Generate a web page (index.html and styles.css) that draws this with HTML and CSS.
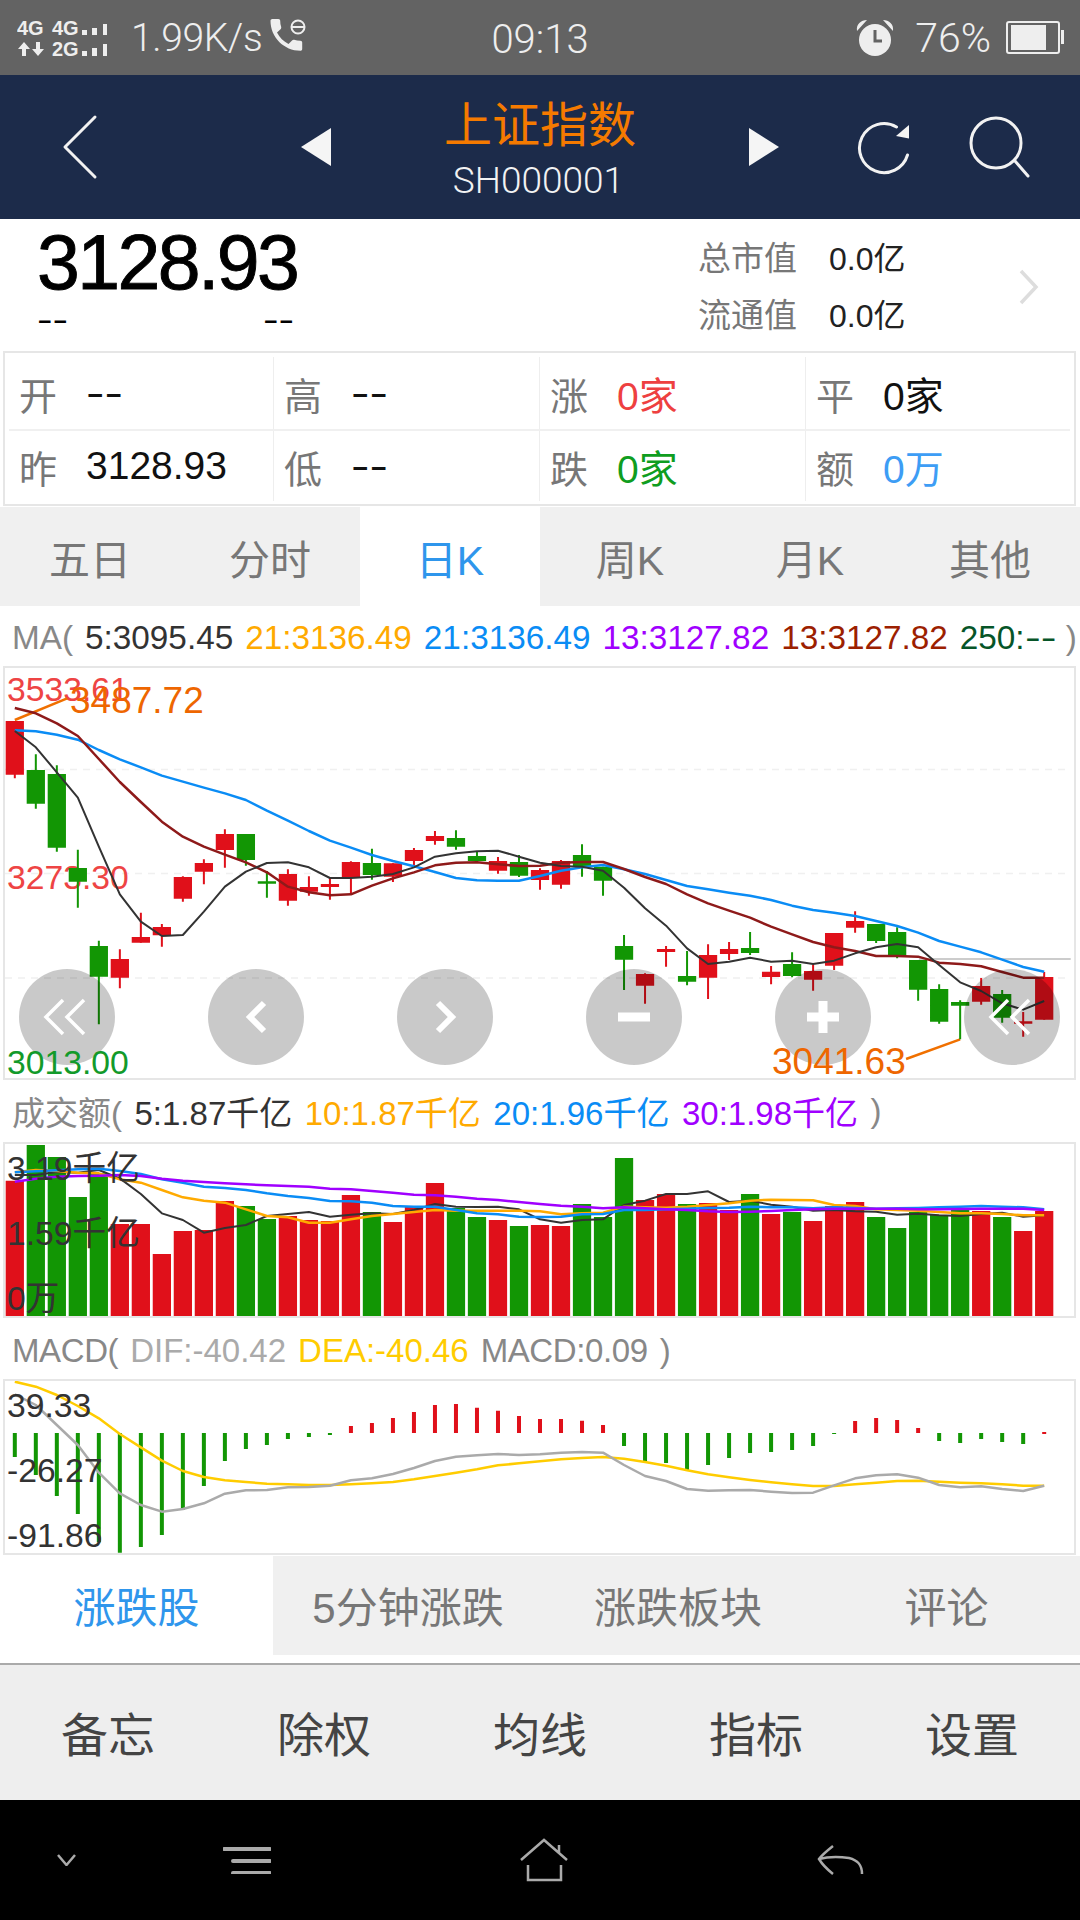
FILE: index.html
```html
<!DOCTYPE html>
<html lang="zh">
<head>
<meta charset="utf-8">
<title>上证指数</title>
<link rel="stylesheet" href="styles.css">
</head>
<body>
<div class="status">
  <div class="st-left">
    <svg class="sig" width="90" height="75" viewBox="0 0 90 75">
      <text class="sig-t" x="0" y="35">4G</text><text class="sig-t" x="35" y="35">4G</text><text class="sig-t" x="35" y="56">2G</text>
      <path class="sig-f" d="M65 30h5v5h-5zM75 28h5v7h-5zM86 24h4v11h-4zM65 51h5v5h-5zM75 48h5v8h-5zM86 44h4v12h-4z"/>
      <path class="sig-f" d="M7 42l6 7h-4v7h-4v-7h-4zM21 56l-6-7h4v-7h4v7h4z"/>
    </svg>
    <span class="speed">1.99K/s</span>
    <svg class="call" width="38" height="36" viewBox="0 0 38 36">
      <path class="call-f" d="M8 13.500c2.500 5 6.600 9 11.500 11.500l3.800-3.800c.5-.5 1.200-.7 1.800-.4 1.900.7 4 1 6.300 1 1 0 1.800.7 1.800 1.700V30c0 1-.8 1.800-1.800 1.800C15 31.800 1.500 18.300 1.500 1.800 1.500.8 2.300 0 3.300 0h6.100c1 0 1.800.8 1.800 1.800 0 2.300.3 4.400 1 6.300.2.600 0 1.300-.4 1.800z"/>
      <circle class="call-o" cx="29" cy="8" r="6.500"/><path class="call-o" d="M23 8h12"/>
    </svg>
  </div>
  <span class="time">09:13</span>
  <div class="st-right">
    <svg width="38" height="38" viewBox="0 0 38 38">
      <circle class="al-f" cx="19" cy="21" r="16"/>
      <path class="al-f" d="M1 12C0 5 5 1 11 1zM37 12c1-7-4-11-10-11z"/>
      <path class="al-h" d="M19 11v11h7"/>
    </svg>
    <span class="pct">76%</span>
    <svg width="60" height="34" viewBox="0 0 60 34">
      <rect class="bat-o" x="1" y="1" width="52" height="31" rx="2"/>
      <rect class="al-f" x="5" y="4" width="35" height="25"/>
      <rect class="al-f" x="55" y="9" width="3" height="14"/>
    </svg>
  </div>
</div>

<header class="header">
  <svg class="h-back" width="40" height="66" viewBox="0 0 40 66"><path class="h-line" d="M33 3L3 33l30 30"/></svg>
  <svg width="30" height="38" viewBox="0 0 30 38"><path class="h-fill" d="M30 0V38L0 19z"/></svg>
  <div class="title">
    <div class="title-name">上证指数</div>
    <div class="title-code">SH000001</div>
  </div>
  <svg width="30" height="38" viewBox="0 0 30 38"><path class="h-fill" d="M0 0V38L30 19z"/></svg>
  <svg class="h-ref" width="56" height="56" viewBox="0 0 56 56"><path class="h-line" d="M52.500 36A24.500 24.500 0 1 1 41.500 8"/><path class="h-fill" d="M54 6V19.500L41 17z"/></svg>
  <svg class="h-search" width="62" height="66" viewBox="0 0 62 66"><circle class="h-line" cx="27" cy="29" r="25"/><path class="h-line" d="M46 47l13 15"/></svg>
</header>

<section class="quote">
  <div class="q-left">
    <div class="q-price">3128.93</div>
    <div class="q-sub"><span class="dash">--</span><span class="dash">--</span></div>
  </div>
  <div class="q-right">
    <div class="q-row"><span class="q-lab">总市值</span><span>0.0亿</span></div>
    <div class="q-row"><span class="q-lab">流通值</span><span>0.0亿</span></div>
  </div>
  <svg class="q-chev" width="22" height="36" viewBox="0 0 22 36"><path d="M3 2l15 16L3 34"/></svg>
</section>

<section class="stats">
  <div class="cell cell-first cell-top"><span class="lab">开</span><span class="dash">--</span></div>
  <div class="cell cell-top"><span class="lab">高</span><span class="dash">--</span></div>
  <div class="cell cell-top"><span class="lab">涨</span><span class="c-red">0家</span></div>
  <div class="cell cell-top cell-last"><span class="lab">平</span><span>0家</span></div>
  <div class="cell cell-first"><span class="lab">昨</span><span>3128.93</span></div>
  <div class="cell"><span class="lab">低</span><span class="dash">--</span></div>
  <div class="cell"><span class="lab">跌</span><span class="c-green">0家</span></div>
  <div class="cell cell-last"><span class="lab">额</span><span class="c-blue">0万</span></div>
</section>

<nav class="ktabs">
  <div>五日</div><div>分时</div><div class="on">日K</div><div>周K</div><div>月K</div><div>其他</div>
</nav>

<div class="legend lg-ma">
  <span class="l-gray">MA(</span><span class="l-dark">5:3095.45</span><span class="l-orange">21:3136.49</span><span class="l-blue">21:3136.49</span><span class="l-purple">13:3127.82</span><span class="l-maroon">13:3127.82</span><span class="l-forest">250:<span class="dash dash-in">--</span></span><span class="l-gray">)</span>
</div>

<div class="chart chart-k">
  <svg width="1069" height="410" viewBox="5 668 1069 410">
    <g class="grid"><path d="M5 769.500H1070M5 873.500H1070M5 978H1070"/></g>
    <text class="t33 c-lred" x="7" y="701">3533.61</text>
    <text class="t37 c-oran" x="70" y="713">3487.72</text>
    <text class="t33 c-lred" x="7" y="889">3273.30</text>
    <g transform="matrix(0.34439 0 0 0.33333 0 660)">
      <path class="ln-gray" d="M2668 897H3109"/>
      <path class="ln-orange" d="M43 180L195 115M2631 1197L2788 1138"/>
      <path class="wick-r" d="M43 183V355M348 868V985M409 758V848M470 792V860M531 649V725M592 598V673M653 508V623M836 628V737M897 649V707M958 652V719M1019 604V703M1141 610V666M1202 564V620M1263 513V554M1446 591V641M1568 625V689M1629 600V686M1873 940V1031M1934 858V920M2056 853V1017M2117 846V900M2239 918V973M2361 915V992M2422 819V930M2483 754V818M2849 954V1034M2971 1056V1130M3032 936V1079"/>
      <path class="wick-g" d="M104 283V446M165 316V575M226 569V743M287 842V1093M714 522V617M775 633V713M1080 566V659M1324 511V569M1385 575V606M1507 585V651M1690 553V650M1751 620V707M1812 825V990M1995 873V976M2178 816V885M2300 877V952M2544 792V849M2605 802V895M2666 900V1022M2727 973V1091M2788 1021V1138M2910 990V1088"/>
      <path class="b-r" d="M16.500 183h53V344h-53zM321.500 897h53V953h-53zM382.500 831h53V848h-53zM443.500 801h53V826h-53zM504.500 651h53V716h-53zM565.500 609h53V635h-53zM626.500 522h53V570h-53zM809.500 642h53V722h-53zM870.500 681h53V695h-53zM931.500 672h53V681h-53zM992.500 606h53V652h-53zM1114.500 610h53V650h-53zM1175.500 570h53V603h-53zM1236.500 528h53V543h-53zM1419.500 603h53V632h-53zM1541.500 630h53V660h-53zM1602.500 603h53V674h-53zM1846.500 942h53V977h-53zM1907.500 867h53V876h-53zM2029.500 885h53V953h-53zM2090.500 867h53V882h-53zM2212.500 935h53V951h-53zM2334.500 933h53V959h-53zM2395.500 819h53V917h-53zM2456.500 783h53V803h-53zM2822.500 978h53V1025h-53zM2944.500 1084h53V1091h-53zM3005.500 951h53V1079h-53z"/>
      <path class="b-g" d="M77.500 330h53V431h-53zM138.500 342h53V563h-53zM199.500 624h53V665h-53zM260.500 858h53V950h-53zM687.500 522h53V600h-53zM748.500 664h53V671h-53zM1053.500 609h53V645h-53zM1297.500 534h53V560h-53zM1358.500 588h53V603h-53zM1480.500 606h53V647h-53zM1663.500 585h53V620h-53zM1724.500 620h53V662h-53zM1785.500 858h53V899h-53zM1968.500 948h53V965h-53zM2151.500 864h53V879h-53zM2273.500 912h53V948h-53zM2517.500 792h53V843h-53zM2578.500 816h53V888h-53zM2639.500 900h53V989h-53zM2700.500 987h53V1085h-53zM2761.500 1026h53V1037h-53zM2883.500 1002h53V1073h-53z"/>
      <polyline class="ln-blue" points="43,211 104,214 165,224 226,239 287,270 348,298 409,322 470,347 531,365 592,383 653,400 714,420 775,452 836,482 897,513 958,542 1019,563 1080,585 1141,603 1202,619 1263,636 1324,654 1385,661 1446,662 1507,662 1568,648 1629,632 1690,622 1751,615 1812,628 1873,642 1934,660 1995,678 2056,688 2117,698 2178,707 2239,720 2300,737 2361,750 2422,758 2483,768 2544,783 2605,798 2666,818 2727,843 2788,860 2849,877 2910,899 2971,921 3032,935"/>
      <polyline class="ln-maroon" points="43,144 104,160 165,190 226,228 287,297 348,366 409,426 470,485 531,530 592,560 653,584 714,607 775,637 836,680 897,697 958,706 1019,703 1080,677 1141,655 1202,637 1263,616 1324,608 1385,607 1446,613 1507,618 1568,617 1629,608 1690,606 1751,606 1812,627 1873,651 1934,672 1995,703 2056,730 2117,752 2178,773 2239,800 2300,823 2361,846 2422,862 2483,873 2544,888 2605,888 2666,890 2727,908 2788,912 2849,919 2910,936 2971,953 3032,953"/>
      <polyline class="ln-black" points="43,213 104,262 165,337 226,413 287,560 348,703 409,785 470,828 531,825 592,755 653,680 714,635 775,609 836,607 897,622 958,654 1019,654 1080,650 1141,642 1202,622 1263,590 1324,580 1385,574 1446,572 1507,590 1568,608 1629,618 1690,620 1751,632 1812,683 1873,745 1934,797 1995,865 2056,912 2117,905 2178,893 2239,905 2300,902 2361,912 2422,902 2483,880 2544,862 2605,852 2666,862 2727,915 2788,967 2849,993 2910,1030 2971,1049 3032,1023"/>
    </g>
  </svg>
  <div class="pads">
    <div class="pad"><svg width="96" height="96" viewBox="0 0 96 96"><path class="ic-thin" d="M44 31L27 48l17 17M65 31L48 48l17 17"/></svg></div>
    <div class="pad"><svg width="96" height="96" viewBox="0 0 96 96"><path class="ic-bold" d="M56 34L42 48l14 14"/></svg></div>
    <div class="pad"><svg width="96" height="96" viewBox="0 0 96 96"><path class="ic-bold" d="M41 34l14 14-14 14"/></svg></div>
    <div class="pad"><svg width="96" height="96" viewBox="0 0 96 96"><path class="ic-fill" d="M32 43.500h32v9H32z"/></svg></div>
    <div class="pad"><svg width="96" height="96" viewBox="0 0 96 96"><path class="ic-fill" d="M32 43.500h11.500V32h9v11.500H64v9H52.500V64h-9V52.500H32z"/></svg></div>
    <div class="pad"><svg width="96" height="96" viewBox="0 0 96 96"><path class="ic-thin" d="M44 31L27 48l17 17M65 31L48 48l17 17"/></svg></div>
  </div>
  <span class="tag tag-low">3013.00</span>
  <span class="tag tag-min">3041.63</span>
</div>

<div class="legend lg-vol">
  <span class="l-gray">成交额(</span><span class="l-dark">5:1.87千亿</span><span class="l-orange">10:1.87千亿</span><span class="l-blue">20:1.96千亿</span><span class="l-purple">30:1.98千亿</span><span class="l-gray">)</span>
</div>

<div class="chart chart-sm">
  <svg width="1069" height="172" viewBox="5 1144 1069 172">
    <g transform="matrix(0.34439 0 0 0.33333 0 1090)">
      <path class="b-r" d="M16.500 272h53V678h-53zM321.500 402h53V678h-53zM382.500 402h53V678h-53zM443.500 492h53V678h-53zM504.500 423h53V678h-53zM565.500 420h53V678h-53zM626.500 333h53V678h-53zM809.500 378h53V678h-53zM870.500 390h53V678h-53zM931.500 393h53V678h-53zM992.500 315h53V678h-53zM1114.500 396h53V678h-53zM1175.500 351h53V678h-53zM1236.500 279h53V678h-53zM1419.500 390h53V678h-53zM1541.500 405h53V678h-53zM1602.500 408h53V678h-53zM1846.500 330h53V678h-53zM1907.500 312h53V678h-53zM2029.500 339h53V678h-53zM2090.500 360h53V678h-53zM2212.500 372h53V678h-53zM2334.500 393h53V678h-53zM2395.500 348h53V678h-53zM2456.500 336h53V678h-53zM2822.500 363h53V678h-53zM2944.500 423h53V678h-53zM3005.500 363h53V678h-53z"/>
      <path class="b-g" d="M77.500 165h53V678h-53zM138.500 201h53V678h-53zM199.500 321h53V678h-53zM260.500 250h53V678h-53zM687.500 348h53V678h-53zM748.500 387h53V678h-53zM1053.500 366h53V678h-53zM1297.500 354h53V678h-53zM1358.500 381h53V678h-53zM1480.500 408h53V678h-53zM1663.500 342h53V678h-53zM1724.500 381h53V678h-53zM1785.500 204h53V678h-53zM1968.500 342h53V678h-53zM2151.500 312h53V678h-53zM2273.500 366h53V678h-53zM2517.500 381h53V678h-53zM2578.500 414h53V678h-53zM2639.500 366h53V678h-53zM2700.500 375h53V678h-53zM2761.500 360h53V678h-53zM2883.500 381h53V678h-53z"/>
      <polyline class="ln-black" points="43,255 104,255 165,246 226,248 287,240 348,265 409,312 470,370 531,390 592,428 653,414 714,405 775,378 836,372 897,366 958,380 1019,374 1080,370 1141,372 1202,360 1263,342 1324,350 1385,351 1446,350 1507,358 1568,388 1629,398 1690,390 1751,388 1812,345 1873,332 1934,312 1995,312 2056,304 2117,336 2178,332 2239,344 2300,350 2361,362 2422,360 2483,364 2544,365 2605,374 2666,371 2727,376 2788,378 2849,372 2910,368 2971,380 3032,376"/>
      <polyline class="ln-orange2" points="43,247 104,240 165,243 226,248 287,250 348,268 409,278 470,300 531,322 592,332 653,338 714,358 775,378 836,382 897,398 958,398 1019,388 1080,378 1141,372 1202,366 1263,360 1324,362 1385,362 1446,362 1507,362 1568,364 1629,373 1690,370 1751,368 1812,350 1873,352 1934,353 1995,350 2056,345 2117,340 2178,332 2239,329 2300,330 2361,331 2422,345 2483,348 2544,358 2605,360 2666,362 2727,366 2788,370 2849,370 2910,372 2971,376 3032,376"/>
      <polyline class="ln-blue" points="43,247 104,244 165,241 226,238 287,236 348,243 409,252 470,268 531,278 592,290 653,294 714,300 775,310 836,318 897,324 958,333 1019,334 1080,338 1141,348 1202,350 1263,350 1324,360 1385,370 1446,373 1507,380 1568,381 1629,380 1690,373 1751,372 1812,360 1873,360 1934,358 1995,356 2056,354 2117,353 2178,350 2239,352 2300,352 2361,355 2422,352 2483,354 2544,356 2605,355 2666,354 2727,352 2788,350 2849,348 2910,350 2971,352 3032,358"/>
      <polyline class="ln-purple" points="43,275 104,266 165,260 226,258 287,257 348,255 409,258 470,266 531,272 592,276 653,280 714,283 775,286 836,288 897,290 958,296 1019,298 1080,303 1141,308 1202,314 1263,316 1324,320 1385,326 1446,330 1507,336 1568,342 1629,347 1690,350 1751,355 1812,352 1873,355 1934,358 1995,360 2056,364 2117,366 2178,365 2239,363 2300,360 2361,358 2422,356 2483,356 2544,356 2605,356 2666,358 2727,358 2788,357 2849,356 2910,356 2971,356 3032,360"/>
    </g>
    <text class="t33 c-ink" x="7" y="1180">3.19千亿</text>
    <text class="t33 c-ink" x="7" y="1245">1.59千亿</text>
    <text class="t33 c-ink" x="7" y="1310">0万</text>
  </svg>
</div>

<div class="legend lg-macd">
  <span class="l-gray l-narrow">MACD(</span><span class="l-silver">DIF:-40.42</span><span class="l-yellow">DEA:-40.46</span><span class="l-gray l-narrow">MACD:0.09</span><span class="l-gray">)</span>
</div>

<div class="chart chart-sm">
  <svg width="1069" height="172" viewBox="5 1381 1069 172">
    <g transform="matrix(0.34439 0 0 0.33333 0 1330)">
      <path class="hist-g" d="M43 309V381M104 309V435M165 309V498M226 309V552M287 309V637M348 309V668M409 309V651M470 309V615M531 309V540M592 309V468M653 309V393M714 309V357M775 309V345M836 309V327M897 309V321M958 309V315M1812 309V348M1873 309V393M1934 309V399M1995 309V420M2056 309V405M2117 309V384M2178 309V369M2239 309V366M2300 309V360M2361 309V348M2422 309V312M2727 309V333M2788 309V339M2849 309V327M2910 309V336M2971 309V342"/>
      <path class="hist-r" d="M1019 309V288M1080 309V279M1141 309V264M1202 309V246M1263 309V225M1324 309V222M1385 309V233M1446 309V242M1507 309V258M1568 309V267M1629 309V267M1690 309V272M1751 309V285M2483 309V273M2544 309V264M2605 309V270M2666 309V294M3032 312V306"/>
      <polyline class="ln-yellow" points="43,155 104,170 165,195 226,228 287,265 348,312 409,352 470,392 531,423 592,441 653,451 714,456 775,461 836,463 897,465 958,465 1019,463 1080,460 1141,456 1202,448 1263,438 1324,428 1385,418 1446,406 1507,400 1568,394 1629,388 1690,384 1751,381 1812,386 1873,396 1934,407 1995,421 2056,433 2117,442 2178,450 2239,457 2300,463 2361,468 2422,468 2483,463 2544,458 2605,453 2666,452 2727,455 2788,458 2849,460 2910,463 2971,467 3032,467"/>
      <polyline class="ln-silver" points="43,193 104,225 165,285 226,345 287,428 348,490 409,525 470,545 531,537 592,520 653,491 714,481 775,480 836,472 897,471 958,467 1019,451 1080,445 1141,432 1202,414 1263,393 1324,380 1385,376 1446,372 1507,375 1568,373 1629,368 1690,366 1751,368 1812,405 1873,438 1934,453 1995,477 2056,482 2117,481 2178,480 2239,485 2300,489 2361,488 2422,466 2483,445 2544,436 2605,433 2666,443 2727,465 2788,472 2849,469 2910,477 2971,483 3032,467"/>
    </g>
    <text class="t33 c-ink" x="7" y="1417">39.33</text>
    <text class="t33 c-ink" x="7" y="1482">-26.27</text>
    <text class="t33 c-ink" x="7" y="1547">-91.86</text>
  </svg>
</div>

<nav class="subtabs">
  <div class="on">涨跌股</div><div>5分钟涨跌</div><div>涨跌板块</div><div>评论</div>
</nav>

<footer class="tools">
  <div>备忘</div><div>除权</div><div>均线</div><div>指标</div><div>设置</div>
</footer>

<div class="navbar">
  <svg width="19" height="12" viewBox="0 0 19 12"><path class="nav-s" d="M1 1l8.500 10L18 1"/></svg>
  <svg width="48" height="28" viewBox="0 0 48 28"><path class="nav-b" d="M1 3h46M10 15h37M10 27h37"/></svg>
  <svg width="48" height="44" viewBox="0 0 48 44"><path class="nav-s" d="M1 22L24 2l23 20M39 7v8M8 27v15h33V27"/></svg>
  <svg width="48" height="32" viewBox="0 0 48 32"><path class="nav-s" d="M16 2C11 6 5 11 2 15c3 5 9 11 14 15M2 15c12-3 22-2 30-1 8 2 13 6 13 16"/></svg>
</div>
</body>
</html>
```
FILE: styles.css
```css
* { box-sizing: border-box; }
html, body { margin: 0; padding: 0; }
body {
  width: 1080px;
  height: 1920px;
  overflow: hidden;
  background: #fff;
  font-family: "Liberation Sans", "Noto Sans CJK SC", sans-serif;
  color: #000;
}
svg { display: block; }
.dash { display: inline-block; transform: scaleX(1.42); transform-origin: left center; }
.dash-in { margin-right: 7px; }

/* status bar */
.status {
  height: 75px;
  background: #636363;
  color: #eee;
  display: grid;
  grid-template-columns: 1fr auto 1fr;
  align-items: center;
  font-family: Roboto, "Liberation Sans", sans-serif;
  font-weight: 300;
}
.st-left { display: flex; align-items: center; padding-left: 17px; }
.speed { font-size: 39px; margin-left: 24px; letter-spacing: -.4px; }
.call { margin-left: 7px; margin-top: -2px; }
.time { font-size: 40px; padding-top: 4px; }
.st-right { display: flex; align-items: center; justify-content: flex-end; padding-right: 14px; }
.pct { font-size: 41px; margin: 0 15px 0 21px; }
.sig-t { font: 700 20px "Liberation Sans", sans-serif; fill: #eee; }
.sig-f, .al-f, .call-f { fill: #eee; }
.call-o { fill: none; stroke: #eee; stroke-width: 2; }
.al-h { fill: none; stroke: #636363; stroke-width: 3; }
.bat-o { fill: none; stroke: #eee; stroke-width: 2; }

/* header */
.header {
  height: 144px;
  background: #1c2b4a;
  display: flex;
  align-items: center;
}
.h-line { fill: none; stroke: #f2f2f2; stroke-width: 3; stroke-linecap: round; stroke-linejoin: round; }
.h-fill { fill: #f5f5f5; }
.h-back { margin: 0 199px 0 62px; }
.title { width: 418px; text-align: center; }
.title-name { font-size: 48px; line-height: 54px; color: #f57a00; margin-top: 5px; }
.title-code { font-size: 37px; line-height: 40px; color: #f2f2f2; margin: 8px 0 0 -3px; font-family: Roboto, "Liberation Sans", sans-serif; font-weight: 300; }
.h-ref { margin-left: 76px; }
.h-search { margin-left: 58px; }

/* quote */
.quote {
  height: 132px;
  display: flex;
  position: relative;
}
.q-left { width: 698px; padding-left: 37px; }
.q-price {
  font-size: 77px;
  line-height: 76px;
  letter-spacing: -2.600px;
  margin-top: 5px;
  -webkit-text-stroke: .9px #000;
}
.q-sub { display: flex; gap: 204px; font-size: 33px; line-height: 33px; margin-top: 3px; }
.q-right { width: 320px; padding-top: 8px; font-size: 32px; }
.q-row { display: flex; height: 57px; align-items: center; color: #222; }
.q-lab { width: 131px; color: #777; font-size: 33px; }
.q-chev { margin-top: 50px; }
.q-chev path { fill: none; stroke: #ddd; stroke-width: 3.500; }

/* day stats */
.stats {
  margin-left: 3px;
  width: 1073px;
  height: 155px;
  border: 2px solid #e6e6e6;
  padding: 4px;
  display: grid;
  grid-template-columns: 265px 266px 266px 1fr;
  grid-template-rows: 74px 70px;
  font-size: 39px;
}
.cell { display: flex; align-items: center; padding-left: 10px; border-right: 1px solid #eee; color: #111; }
.cell-first { padding-left: 10px; }
.cell-last { border-right: 0; }
.cell-top { border-bottom: 2px solid #f0f0f0; }
.lab { width: 67px; color: #777; font-size: 38px; }
.c-red { color: #ee4040; }
.c-green { color: #0f9d20; }
.c-blue { color: #3d9df5; }

/* K tabs */
.ktabs {
  margin-top: 1px;
  height: 99px;
  background: #f0f0f0;
  display: grid;
  grid-template-columns: repeat(6, 180px);
  font-size: 41px;
  color: #777;
}
.ktabs div { display: flex; align-items: center; justify-content: center; }
.ktabs .on { background: #fff; color: #2f96ec; }

/* legends */
.legend {
  display: flex;
  align-items: center;
  gap: 12px;
  padding-left: 12px;
  font-size: 33.300px;
  white-space: nowrap;
}
.lg-ma { height: 60px; padding-top: 3px; }
.lg-vol { height: 62px; gap: 12.500px; font-size: 33px; }
.lg-macd { height: 61px; padding-top: 4px; gap: 12px; font-size: 33px; }
.l-gray { color: #888; }
.l-narrow { letter-spacing: -.4px; }
.l-dark { color: #333; }
.l-orange { color: #ffaa00; }
.l-blue { color: #0a8cf5; }
.l-purple { color: #a000ff; }
.l-maroon { color: #9c2000; }
.l-forest { color: #065528; }
.l-silver { color: #aaa; }
.l-yellow { color: #ffcc00; }

/* charts */
.chart {
  margin-left: 3px;
  width: 1073px;
  border: 2px solid #e6e6e6;
  position: relative;
}
.chart-k { height: 414px; }
.chart-sm { height: 176px; }
.grid path { stroke: #f0f0f0; stroke-width: 1.500; stroke-dasharray: 7 6; fill: none; }
.t33 { font-size: 33.700px; }
.t37 { font-size: 37px; }
.c-lred { fill: #ee4444; }
.c-oran { fill: #ee6600; }
.c-ink { fill: #333; }
.b-r { fill: #e0101a; }
.b-g { fill: #129604; }
.wick-r, .wick-g, .hist-g, .hist-r,
.ln-gray, .ln-orange, .ln-orange2, .ln-blue, .ln-maroon, .ln-black, .ln-purple, .ln-yellow, .ln-silver {
  fill: none;
  vector-effect: non-scaling-stroke;
  stroke-linejoin: round;
}
.wick-r { stroke: #e0101a; stroke-width: 2; }
.wick-g { stroke: #129604; stroke-width: 2; }
.hist-g { stroke: #129604; stroke-width: 4; }
.hist-r { stroke: #e0101a; stroke-width: 4; }
.ln-gray { stroke: #ccc; stroke-width: 2; }
.ln-orange { stroke: #f07000; stroke-width: 2.500; }
.ln-orange2 { stroke: #ffaa00; stroke-width: 2.500; }
.ln-blue { stroke: #0a8cf5; stroke-width: 2.500; }
.ln-maroon { stroke: #8e1a1a; stroke-width: 2.500; }
.ln-black { stroke: #333; stroke-width: 2; }
.ln-purple { stroke: #a000ff; stroke-width: 2.500; }
.ln-yellow { stroke: #ffcc00; stroke-width: 2.500; }
.ln-silver { stroke: #aaa; stroke-width: 2.500; }

/* overlays on the K chart */
.pads {
  position: absolute;
  left: 14px;
  top: 301px;
  display: flex;
  gap: 93px;
}
.pad { width: 96px; height: 96px; border-radius: 50%; background: rgba(0, 0, 0, .21); }
.ic-thin { fill: none; stroke: #fff; stroke-width: 3.500; }
.ic-bold { fill: none; stroke: #fff; stroke-width: 6; }
.ic-fill { fill: #fff; }
.tag { position: absolute; line-height: 1; }
.tag-low { left: 2px; top: 378px; font-size: 33.700px; color: #129a2a; }
.tag-min { left: 767px; top: 375px; font-size: 37px; color: #ee6600; }

/* bottom tabs */
.subtabs {
  margin-top: 1px;
  height: 99px;
  background: #f0f0f0;
  display: grid;
  grid-template-columns: 273px 270px 270px 1fr;
  font-size: 42px;
  color: #777;
}
.subtabs div { display: flex; align-items: center; justify-content: center; padding-bottom: 3px; }
.subtabs .on { background: #fff; color: #2f96ec; }

.tools {
  margin-top: 8px;
  height: 137px;
  border-top: 2px solid #aaa;
  background: #eee;
  display: grid;
  grid-template-columns: repeat(5, 216px);
  font-size: 47px;
  color: #444;
}
.tools div { display: flex; align-items: center; justify-content: center; padding-bottom: 2px; }

.navbar {
  height: 120px;
  background: #000;
  display: grid;
  grid-template-columns: 166px 297px 297px 1fr;
  align-items: center;
  padding-left: 57px;
}
.nav-s { fill: none; stroke: #aaa; stroke-width: 2.500; }
.nav-b { fill: none; stroke: #aaa; stroke-width: 4; stroke-linecap: round; }
```
